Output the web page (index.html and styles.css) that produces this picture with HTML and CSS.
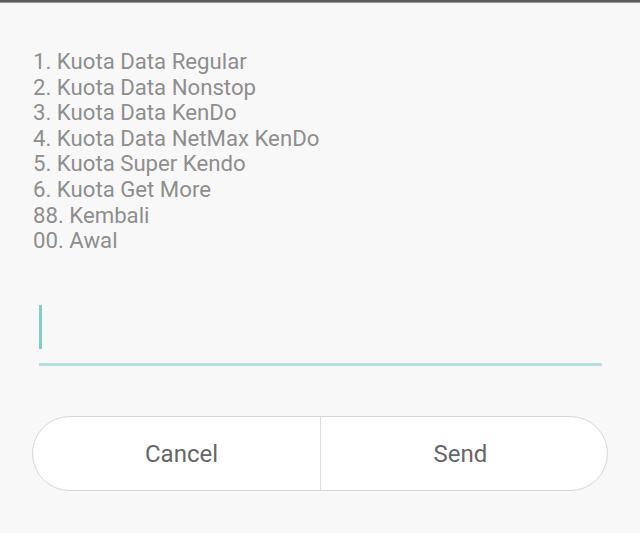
FILE: index.html
```html
<!DOCTYPE html>
<html>
<head>
<meta charset="utf-8">
<link rel="stylesheet" href="styles.css">
</head>
<body>
<div class="topbar"></div>
<div class="dialog">
  <div class="message">
    <div>1. Kuota Data Regular</div>
    <div>2. Kuota Data Nonstop</div>
    <div>3. Kuota Data KenDo</div>
    <div>4. Kuota Data NetMax KenDo</div>
    <div>5. Kuota Super Kendo</div>
    <div>6. Kuota Get More</div>
    <div>88. Kembali</div>
    <div>00. Awal</div>
  </div>
  <div class="field">
    <div class="cursor"></div>
  </div>
  <div class="buttons">
    <div class="btn btn-cancel">Cancel</div>
    <div class="btn btn-send">Send</div>
  </div>
</div>
</body>
</html>
```
FILE: styles.css
```css
html, body {
  margin: 0;
  padding: 0;
  background: #f8f8f8;
  width: 640px;
  height: 533px;
  overflow: hidden;
  font-family: Roboto, "Noto Sans", sans-serif;
}
.topbar {
  height: 2px;
  background: #5c5c5c;
  border-bottom: 1px solid #9a9a9a;
}
.dialog {
  padding: 46px 32px 0 33px;
}
.message {
  color: #8e8e8e;
  font-size: 22.2px;
  line-height: 25.6px;
}
.field {
  margin: 51px 6px 0 6px;
  height: 58px;
  border-bottom: 3px solid #b4e1dc;
  display: flex;
  align-items: flex-start;
}
.cursor {
  width: 3px;
  height: 44px;
  background: #7fcfc6;
}
.buttons {
  margin: 50px 0 0 -1px;
  width: 574px;
  height: 73px;
  border: 1px solid #d6d6d6;
  border-radius: 38px;
  background: #ffffff;
  display: flex;
  overflow: hidden;
}
.btn {
  box-sizing: border-box;
  width: 50%;
  display: flex;
  align-items: center;
  justify-content: center;
  color: #666666;
  font-size: 24px;
  padding-top: 2px;
}
.btn-cancel {
  padding-left: 10px;
}
.btn-send {
  border-left: 1px solid #dcdcdc;
  padding-right: 7px;
}
```
